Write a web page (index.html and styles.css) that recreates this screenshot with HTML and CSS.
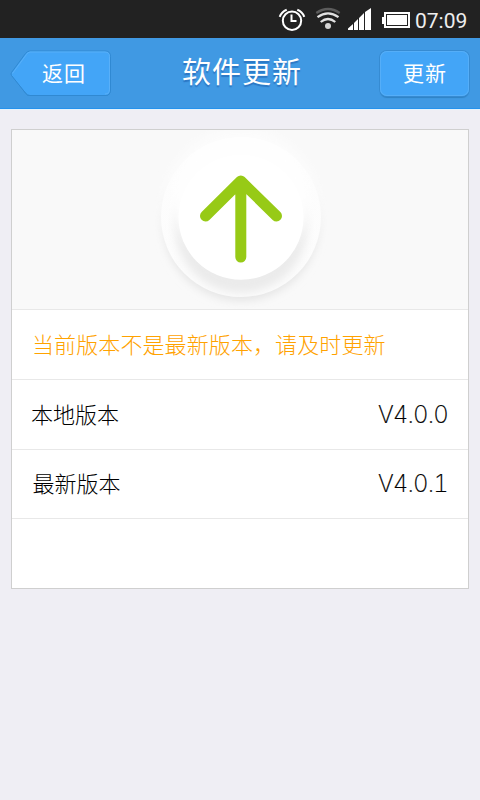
FILE: index.html
```html
<!DOCTYPE html>
<html lang="zh-CN">
<head>
<meta charset="utf-8">
<title>软件更新</title>
<link rel="stylesheet" href="styles.css">
</head>
<body>
<div class="status">
  <svg class="status-icons" width="132" height="38" viewBox="278 0 132 38" fill="none" stroke="#fff">
    <circle cx="292" cy="20.700" r="9.200" stroke-width="2"/>
    <path d="M291.500 14.500v6.500h5" stroke-width="2"/>
    <path d="M279.700 16.800q2-5 7-7M304.300 16.800q-2-5-7-7" stroke-width="2"/>
    <path d="M316.300 13q11.700-8 23.400 0" stroke="#5c5c5c" stroke-width="2.300"/>
    <path d="M317.500 17.200q10.500-7.800 21 0M320.700 22q7.300-6 14.600 0" stroke="#e2e2e2" stroke-width="2.200"/>
    <circle cx="328" cy="26" r="3" fill="#d4d4d4" stroke="none"/>
    <path d="M348 30v-1.500l5-4.500v6zM354 30v-7l4-4v11zM359 30v-12l5-5v17zM365 30v-18l6-4v22z" fill="#fff" stroke="none"/>
    <path d="M384 12h26v16h-26v-4h-2v-7h2z" fill="#fff" stroke="none"/>
    <rect x="386.500" y="14.500" width="21" height="11" stroke="#222" stroke-width="1"/>
  </svg>
  <span class="clock">07:09</span>
</div>
<header class="bar">
  <a class="back">
    <svg class="back-shape" width="102" height="49" viewBox="0 0 102 49">
      <path d="M20 3H95Q100.500 3 100.500 9V41Q100.500 47 95 47H20Q17.500 47 15.500 44.500L2 27Q1 25.500 2 24L15.500 6Q17.500 3 20 3Z" fill="#2f82c4"/>
      <path d="M20 1.500H95Q100.500 1.500 100.500 7V40.500Q100.500 46 95 46H20Q17.500 46 15.500 43.500L1.500 26Q.5 24.500 1.500 23L15.500 4Q17.500 1.500 20 1.500Z" transform="translate(0 .5)" fill="#43a5f7" stroke="#3089d2"/>
      <path d="M2.500 24.500L16.500 5.500Q18 3 20 3H95Q99.500 3 99.500 7.500V40Q99.500 45 95 45" fill="none" stroke="#59b0f9"/>
    </svg>
    <span class="back-text">返回</span>
  </a>
  <h1 class="title">软件更新</h1>
  <a class="update">更新</a>
</header>
<main class="card">
  <div class="hero">
    <svg class="hero-art" width="200" height="179" viewBox="141 130 200 179">
      <defs>
        <linearGradient id="ring" x1="0" y1="0" x2="0" y2="1">
          <stop offset="0" stop-color="#fdfdfd"/><stop offset="1" stop-color="#fcfcfc"/>
        </linearGradient>
        <filter id="soft" x="-20%" y="-20%" width="140%" height="140%"><feGaussianBlur stdDeviation="4.500"/></filter>
        <clipPath id="disc"><circle cx="241" cy="217" r="80"/></clipPath>
      </defs>
      <circle cx="241" cy="223" r="78" fill="#e5e5e5" filter="url(#soft)"/>
      <circle cx="241" cy="207" r="79" fill="#fcfcfc" filter="url(#soft)"/>
      <circle cx="241" cy="217" r="80" fill="url(#ring)"/>
      <g clip-path="url(#disc)"><circle cx="241" cy="227" r="66" fill="#ebebeb" filter="url(#soft)"/><circle cx="241" cy="200" r="68" fill="#fefefe" filter="url(#soft)"/></g>
      <circle cx="241" cy="217.300" r="62.500" fill="#fff"/>
      <path d="M240.800 257V181M205.500 216L240.800 181L276.500 216" fill="none" stroke="#97ca16" stroke-width="11" stroke-linecap="round" stroke-linejoin="round"/>
    </svg>
  </div>
  <div class="row notice">当前版本不是最新版本，请及时更新</div>
  <div class="row local"><span>本地版本</span><span class="version">V4.0.0</span></div>
  <div class="row latest"><span>最新版本</span><span class="version">V4.0.1</span></div>
</main>
</body>
</html>
```
FILE: styles.css
```css
* { box-sizing: border-box; }
body {
  margin: 0;
  height: 800px;
  overflow: hidden;
  background: #efeef4;
  font-family: "Noto Sans CJK SC", sans-serif;
}
.status {
  height: 38px;
  background: #222;
  display: flex;
  padding-left: 278px;
}
.clock {
  margin-left: 5px;
  font: 21px/42px Roboto, sans-serif;
  color: #eee;
}
.bar {
  height: 72px;
  background: #4099e3;
  border-bottom: 1px solid #e4f3fe;
  box-shadow: inset 0 -1px #2592ed;
  display: grid;
  grid-template-columns: 102px 1fr 92px;
  padding: 11px 10px 0 10px;
  color: #fff;
}
.back { display: grid; }
.back-shape, .back-text { grid-area: 1 / 1; }
.back-text {
  padding-left: 32px;
  font-size: 21px;
  line-height: 47px;
  letter-spacing: 1px;
}
.title {
  margin: 0;
  padding-left: 70px;
  font-size: 29px;
  font-weight: 400;
  line-height: 42px;
  letter-spacing: 1px;
  text-shadow: 0 2px 1px #2b77c4;
}
.update {
  width: 89px;
  height: 45px;
  margin: 2px 0 0 2px;
  border-radius: 7px;
  background: #43a5f7;
  box-shadow: inset 0 0 0 1px #55aef8, 0 0 0 1px #368bd2, 0 2px 1px #2f82c4;
  font-size: 21px;
  line-height: 43px;
  letter-spacing: 1px;
  padding-left: 23px;
}
.card {
  width: 458px;
  height: 460px;
  margin: 19px 0 0 11px;
  border: 1px solid #cfcfcf;
  background: #fff;
}
.hero {
  height: 180px;
  background: #f9f9f9;
  border-bottom: 1px solid #e8e8e8;
  padding-left: 129px;
}
.hero-art, .status-icons { display: block; }
.row {
  height: 70px;
  padding: 0 20px;
  border-bottom: 1px solid #e8e8e8;
  display: flex;
  justify-content: space-between;
  font-size: 22px;
  font-weight: 300;
  line-height: 66px;
  color: #000;
}
.notice { color: #ffa200; letter-spacing: .1px; }
.local { padding-left: 19px; }
.latest { height: 69px; padding-left: 20.5px; line-height: 64px; }
.version {
  font-family: Inter, sans-serif;
  font-size: 24px;
  font-weight: 200;
  font-variant-numeric: tabular-nums;
  letter-spacing: -.85px;
  line-height: 70px;
  -webkit-text-stroke: .2px #000;
}
.latest .version { line-height: 68px; }
```
